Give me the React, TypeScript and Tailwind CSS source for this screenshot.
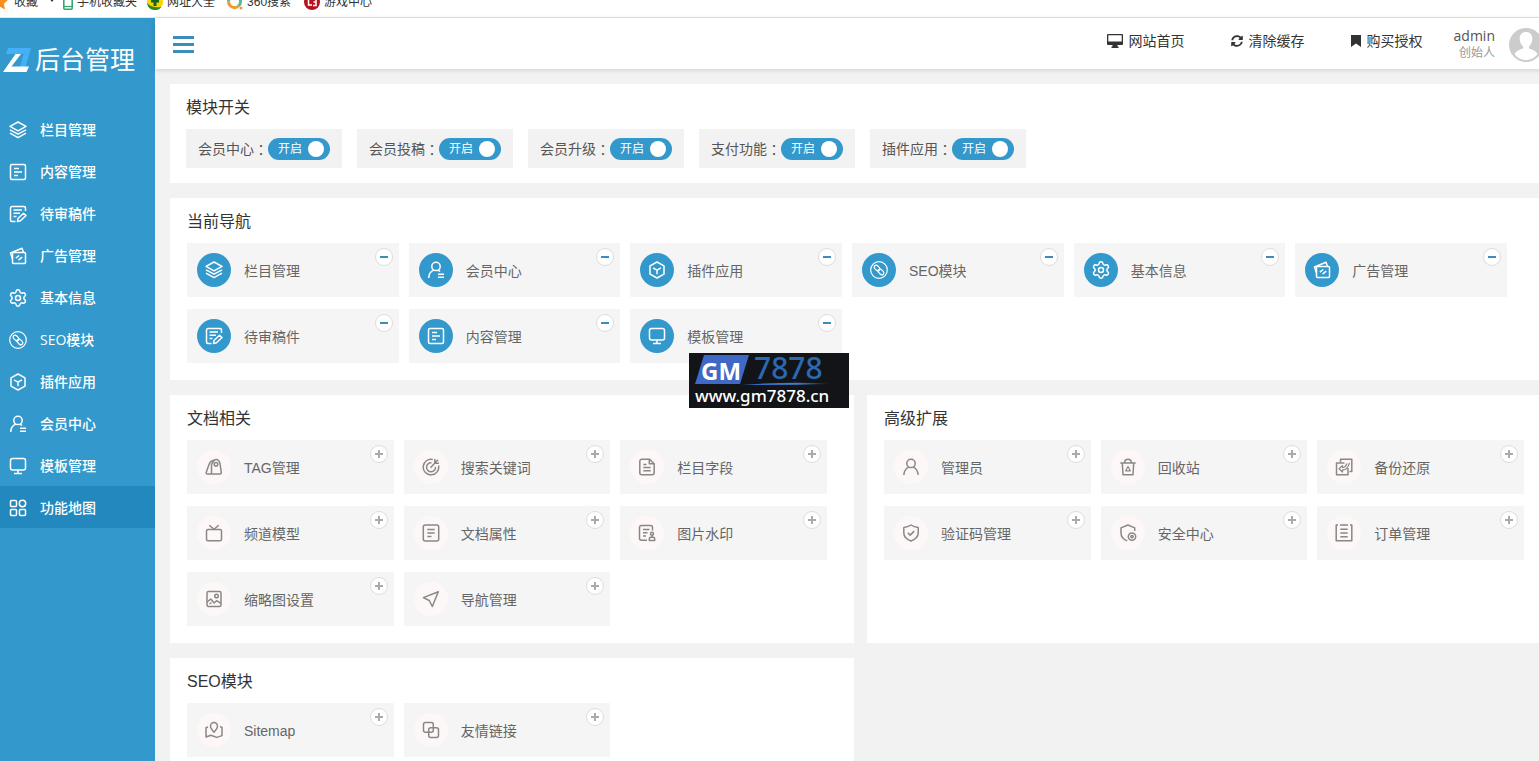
import { useState } from "react";
import type { ReactNode } from "react";
import { Settings } from "lucide-react";
import { FaSyncAlt } from "react-icons/fa";

const icons: Record<string, ReactNode> = {
  layers: (
    <path d="M9 1 17 5.400 9 9.800 1 5.400zM1 8.800l8 4.400 8-4.400M1 12.200l8 4.400 8-4.400" />
  ),
  content: (
    <>
      <rect x="1.500" y="1.500" width="15" height="15" rx="1.500" />
      <path d="M5 5.500h5M5 9h8M5 12.500h4" />
    </>
  ),
  draft: (
    <>
      <path d="M16.500 6V3A1.500 1.500 0 0 0 15 1.500H3A1.500 1.500 0 0 0 1.500 3v12A1.500 1.500 0 0 0 3 16.500h3.500M4.500 5H13M4.500 8.300H11M4.500 11.600h3" />
      <path d="m9 13.500 5.500-5.300 2.500 2.300-5.500 5.300-3 .7z" />
    </>
  ),
  ad: (
    <>
      <rect x="3.500" y="5.500" width="13" height="11" rx="1" />
      <path d="M3.500 12 1.500 6 13 1.300l1.500 4.200M6.800 11.200 10.200 8.500M9.500 13.200l3.700-3" />
    </>
  ),
  seo: (
    <>
      <circle cx="9" cy="9" r="8.300" strokeWidth="1.200" />
      <g transform="rotate(45 9 9)" strokeWidth="1.200">
        <rect x="3" y="7" width="6.600" height="4" rx="2" />
        <rect x="8.400" y="7" width="6.600" height="4" rx="2" />
      </g>
    </>
  ),
  plugin: (
    <>
      <path d="M9 1 16 4.900v8.200L9 17l-7-3.900V4.900z" />
      <path d="m5 6.800 4 2.300 4-2.300M9 9.100v4.200" />
    </>
  ),
  member: (
    <>
      <circle cx="9" cy="5.400" r="4.200" />
      <path d="M1.700 17c0-3.700 1.800-6.600 5.300-7.900M11 9.200c.8.300 1.500.8 2 1.400M11 13.200h6M11 16.300h6" />
    </>
  ),
  template: (
    <>
      <rect x="1.500" y="1.500" width="15" height="11.500" rx="2" />
      <path d="M9 13v3.300M5 16.500h8" />
    </>
  ),
  map: (
    <>
      <rect x="1.500" y="1.500" width="6" height="6" rx="1" />
      <circle cx="13.500" cy="4.500" r="3.200" />
      <rect x="1.500" y="10.500" width="6" height="6" rx="1" />
      <rect x="10.500" y="10.500" width="6" height="6" rx="1" />
    </>
  ),
  tag: (
    <>
      <path d="M6.500 16V6.500L9 2.300c1.600-1.300 4-1 5 .8l1 2.400 1.300 9a1.300 1.300 0 0 1-1.300 1.500H2.300a1.200 1.200 0 0 1-1.100-1.600L4 6.500c.8-2 2.500-4 5-4.200" />
      <circle cx="11" cy="6.300" r="1.800" />
    </>
  ),
  target: (
    <>
      <path d="M10.800 1.500A7.800 7.800 0 1 0 16.600 7.500" />
      <path d="M9.500 4.800a4.500 4.500 0 1 0 4 4M8.500 9.700l4.600-4.900M12.800 1v4.200h4.200M13 5l3-3.300" />
    </>
  ),
  field: (
    <>
      <path d="M11.500 1.200H3.800a2 2 0 0 0-2 2v11.600a2 2 0 0 0 2 2h10.400a2 2 0 0 0 2-2V5.800z" />
      <path d="M11.300 1.500v4.300H16M5.300 6.500h3.200M5.300 9.500h7.400M5.300 12.700h7.400" />
    </>
  ),
  channel: (
    <>
      <rect x="1.500" y="5.500" width="15" height="11.300" rx="1.500" />
      <path d="M4.300 1.200 9 5.300l4.700-4.100" />
    </>
  ),
  attr: (
    <>
      <rect x="1.300" y="1" width="15.400" height="16" rx="2" />
      <path d="M5.300 5.500h7.400M5.300 9h7.400M5.300 12.500h4.200" />
    </>
  ),
  watermark: (
    <>
      <path d="M14.500 6.500v-3a2 2 0 0 0-2-2h-9a2 2 0 0 0-2 2v10.800a2 2 0 0 0 2 2H9M5 5.500h6.500M5 8.700h4.500M5 12h3" />
      <circle cx="14" cy="9.800" r="1.500" />
      <path d="M14 11.300v2M11.300 16.500v-1.700c0-1 .6-1.500 1.500-1.500h2.400c.9 0 1.500.5 1.500 1.500v1.700z" />
    </>
  ),
  image: (
    <>
      <rect x="2" y="1.500" width="14" height="15" rx="1.500" />
      <circle cx="11.500" cy="6" r="1.800" />
      <path d="m2.200 12 3.600-3 3.300 4 2.500-2.300 4.200 2.600M4.500 14l2-1.500" />
    </>
  ),
  navigate: <path d="M16.300 1.700 1.300 7.600l6 2.900 3 6z" />,
  user: (
    <>
      <circle cx="9" cy="5.400" r="4.200" />
      <path d="M1.800 17c.3-4.200 2-6.700 5-7.900M16.200 17c-.3-4.200-2-6.700-5-7.900" />
    </>
  ),
  recycle: (
    <>
      <path d="M1.300 5h15.400M3.300 5l.7 11.700h10L14.700 5M5.500 4.800C5.700 2.600 7 1.300 9 1.300s3.300 1.300 3.500 3.500" />
      <path d="m9 8.500-2.300 4.300h4.600z" strokeWidth="1.200" />
    </>
  ),
  backup: (
    <>
      <path d="M5.500 4V1.200h11.300v12.300H14.500M13 10v6.800H1.500V5h8" />
      <path d="M7.500 7.500 4 10.800 7.500 14v-2.200c3 .2 5.500-2 7-7M7.500 7.500v2c2 0 3.500-1.500 4.500-4" strokeWidth="1.200" />
    </>
  ),
  shield: (
    <>
      <path d="M9 1c2 1.500 4.500 2.300 7.200 2.400v5.400c0 4-2.800 6.700-7.200 8.200-4.400-1.500-7.200-4.200-7.200-8.200V3.400C4.500 3.300 7 2.500 9 1z" />
      <path d="m5.800 8.700 2.400 2.400 4-4" />
    </>
  ),
  security: (
    <>
      <path d="M15.700 7V3.900L9 1 2 3.900V9c0 3.700 2.500 6.500 6.200 7.900" />
      <circle cx="13" cy="12.600" r="3.700" />
      <circle cx="13" cy="12.600" r="1.200" />
    </>
  ),
  order: (
    <>
      <path d="M3 1H1.200v15.800h15.600V1H15M5 1h8" />
      <path d="M5.300 5.300h7.400M5.300 9h7.400M5.300 12.700h7.400" />
    </>
  ),
  sitemap: (
    <>
      <path d="M9 11.200C7 9 5.500 7.200 5.500 5a3.500 3.500 0 0 1 7 0c0 2.200-1.500 4-3.500 6.200z" />
      <path d="M3 6 1 6.800V16l4.800-1.800 6 2.200 5.200-1.800V6.300L15 5.800" />
    </>
  ),
  link: (
    <>
      <rect x="1.500" y="1.500" width="9.800" height="9.800" rx="2" />
      <rect x="6.700" y="6.700" width="9.800" height="9.800" rx="2" />
    </>
  ),
};

const Icon = ({ name }: { name: string }) => {
  if (name === "gear") return <Settings size={20} strokeWidth={1.8} className="-mx-px" />;

  return (
    <svg
      viewBox="0 0 18 18"
      className="w-[18px] h-[18px] shrink-0"
      fill="none"
      stroke="currentColor"
      strokeWidth="1.500"
      strokeLinejoin="round"
    >
      {icons[name]}
    </svg>
  );
};

type Item = { icon: string; label: string };

const menu: Item[] = [
  { icon: "layers", label: "栏目管理" },
  { icon: "content", label: "内容管理" },
  { icon: "draft", label: "待审稿件" },
  { icon: "ad", label: "广告管理" },
  { icon: "gear", label: "基本信息" },
  { icon: "seo", label: "SEO模块" },
  { icon: "plugin", label: "插件应用" },
  { icon: "member", label: "会员中心" },
  { icon: "template", label: "模板管理" },
  { icon: "map", label: "功能地图" },
];

const currentNav: Item[] = [
  { icon: "layers", label: "栏目管理" },
  { icon: "member", label: "会员中心" },
  { icon: "plugin", label: "插件应用" },
  { icon: "seo", label: "SEO模块" },
  { icon: "gear", label: "基本信息" },
  { icon: "ad", label: "广告管理" },
  { icon: "draft", label: "待审稿件" },
  { icon: "content", label: "内容管理" },
  { icon: "template", label: "模板管理" },
];

const documents: Item[] = [
  { icon: "tag", label: "TAG管理" },
  { icon: "target", label: "搜索关键词" },
  { icon: "field", label: "栏目字段" },
  { icon: "channel", label: "频道模型" },
  { icon: "attr", label: "文档属性" },
  { icon: "watermark", label: "图片水印" },
  { icon: "image", label: "缩略图设置" },
  { icon: "navigate", label: "导航管理" },
];

const advanced: Item[] = [
  { icon: "user", label: "管理员" },
  { icon: "recycle", label: "回收站" },
  { icon: "backup", label: "备份还原" },
  { icon: "shield", label: "验证码管理" },
  { icon: "security", label: "安全中心" },
  { icon: "order", label: "订单管理" },
];

const seo: Item[] = [
  { icon: "sitemap", label: "Sitemap" },
  { icon: "link", label: "友情链接" },
];

const BookmarksBar = () => (
  <div className="flex h-[18px] shrink-0 items-end overflow-hidden border-b border-[#e6e6e6] bg-white pb-[7px] text-xs leading-4 text-[#333]">
    <a href="#" className="flex items-end">
      <svg viewBox="0 0 16 16" className="-ml-2 mr-1.5 h-4 w-4">
        <path d="m8 0 2.400 5.200 5.600.7-4.100 3.900 1.100 5.700L8 12.700l-5 2.800 1.100-5.700L0 5.900l5.600-.7z" fill="#f78f1e" />
      </svg>
      收藏
      <svg viewBox="0 0 6 4" className="mb-2 ml-[11px] h-1 w-1.5">
        <path d="M0 0h6L3 4z" fill="#333" />
      </svg>
    </a>
    <a href="#" className="ml-2 flex items-end">
      <svg viewBox="0 0 10 16" className="mr-1 h-4 w-2.5">
        <rect x=".8" y=".8" width="8.400" height="14.400" rx="1" fill="#fff" stroke="#35a870" strokeWidth="1.600" />
        <path d="M1 12.500h8" stroke="#35a870" strokeWidth="1.200" />
      </svg>
      手机收藏夹
    </a>
    <a href="#" className="ml-2.5 flex items-end">
      <svg viewBox="0 0 16 16" className="mr-1 h-4 w-4">
        <circle cx="8" cy="8" r="8" fill="#f6d500" />
        <path d="M0 9a8 8 0 0 0 14.500 3.700C9 14 4 13 0 9z" fill="#2c8a2c" />
        <path d="M8 3v9M4 7h8" stroke="#14641e" strokeWidth="3" />
      </svg>
      网址大全
    </a>
    <a href="#" className="ml-3 flex items-end">
      <svg viewBox="0 0 16 16" className="mr-1 h-4 w-4" fill="none" strokeWidth="3">
        <path d="M1.500 7.500a6 6 0 0 0 10 4.500" stroke="#f39a2b" />
        <path d="M1.500 7.500a6 6 0 1 1 10 4.500" stroke="#57b8a0" />
        <circle cx="14" cy="14" r="1.500" fill="#f39a2b" stroke="none" />
      </svg>
      360搜索
    </a>
    <a href="#" className="ml-[13px] flex items-end">
      <svg viewBox="0 0 16 16" className="mr-1 h-4 w-4">
        <circle cx="8" cy="8" r="8" fill="#b5121f" />
        <path d="M7 4.500H4.500v6.500H8M9 5h3v3H9.500M12 8v3.500H9" fill="none" stroke="#fff" strokeWidth="1.500" />
      </svg>
      游戏中心
    </a>
  </div>
);

const Sidebar = () => {
  const [active, setActive] = useState("功能地图");

  return (
    <aside className="w-[155px] shrink-0 bg-[#3398cc] text-white">
      <div className="flex h-[90px] items-center pl-[3px] pb-1.5">
        <svg viewBox="0 0 28 24" className="h-6 w-7 shrink-0">
          <path d="M5 0h23l-5.500 19H17l3.500-13H3z" fill="#45b0f5" />
          <path d="M12.500 6H18L8.500 18.500H26L23.500 24H0z" fill="#fff" />
        </svg>
        <span className="ml-1 whitespace-nowrap text-[25px] leading-8">后台管理</span>
      </div>
      <nav>
        {menu.map((item) => (
          <a
            key={item.label}
            href="#"
            onClick={() => setActive(item.label)}
            className={`flex h-[42px] items-center gap-[13px] pl-[9px] pt-0.5 font-['Open_Sans','Noto_Sans_CJK_SC',sans-serif] text-sm font-medium ${
              active === item.label ? "bg-[#2288bd]" : ""
            }`}
          >
            <Icon name={item.icon} />
            <span>{item.label}</span>
          </a>
        ))}
      </nav>
    </aside>
  );
};

const Header = () => (
  <header className="z-10 flex h-[51px] shrink-0 items-center bg-white pl-[18px] pr-2 shadow-[0_1px_5px_rgba(0,0,0,0.15)]">
    <button aria-label="菜单" className="flex w-[21px] flex-col gap-1 pt-0.5">
      <span className="h-[3px] bg-[#3d8dbc]" />
      <span className="h-[3px] bg-[#3d8dbc]" />
      <span className="h-[3px] bg-[#3d8dbc]" />
    </button>
    <div className="ml-auto flex items-center gap-[46px] pb-1.5 text-sm text-[#333]">
      <a href="#" className="flex items-center gap-1.5">
        <svg viewBox="0 0 16 14" className="h-3.5 w-4">
          <path d="M1 0h14a1 1 0 0 1 1 1v9a1 1 0 0 1-1 1h-4.500v1.500h1V14h-7v-1.500h1V11H1a1 1 0 0 1-1-1V1a1 1 0 0 1 1-1zm.3 1.300v6.200h13.400V1.300z" fill="currentColor" />
        </svg>
        网站首页
      </a>
      <a href="#" className="flex items-center gap-1.5">
        <FaSyncAlt size={12} />
        清除缓存
      </a>
      <a href="#" className="flex items-center gap-1.5">
        <svg viewBox="0 0 10 12" className="h-3 w-2.5">
          <path d="M0 0h10v12L5 8.500 0 12z" fill="currentColor" />
        </svg>
        购买授权
      </a>
    </div>
    <div className="ml-[31px] flex flex-col text-right font-['Open_Sans','Noto_Sans_CJK_SC',sans-serif]">
      <span className="text-sm leading-[18px] text-[#555]">admin</span>
      <span className="text-xs leading-4 text-[#999]">创始人</span>
    </div>
    <svg viewBox="0 0 34 34" className="ml-3.5 mt-0.5 h-[34px] w-[34px] shrink-0">
      <circle cx="17" cy="17" r="17" fill="#ccc" />
      <path d="M17 4c-4 0-6.300 2.700-6.300 6.800 0 3.500 1.400 6 3.300 7.500v2.200c-4 1.200-7.300 2.700-8.500 5.500 2.500 3.700 6.700 6 11.500 6s9-2.300 11.500-6c-1.200-2.800-4.500-4.300-8.500-5.500v-2.200c1.900-1.500 3.300-4 3.300-7.500C23.300 6.700 21 4 17 4z" fill="#fff" />
    </svg>
  </header>
);

const Panel = ({ title, children }: { title: string; children: ReactNode }) => (
  <section className="bg-white px-[17px] pb-[17px] pt-3">
    <h2 className="mb-[9px] text-base leading-6 text-[#333]">{title}</h2>
    {children}
  </section>
);

const Card = ({ item, added = false }: { item: Item; added?: boolean }) => (
  <div className="relative flex h-[54px] items-center bg-[#f5f5f5] pl-2.5">
    <a href="#" className="flex items-center gap-[13px] text-sm text-[#666]">
      <span
        className={`flex h-[34px] w-[34px] items-center justify-center rounded-full ${
          added ? "bg-[#3398cc] text-white" : "bg-[#fdf8f7] text-[#888]"
        }`}
      >
        <Icon name={item.icon} />
      </span>
      <span className="pt-0.5">{item.label}</span>
    </a>
    <button
      aria-label={added ? "移除" : "添加"}
      className={`absolute right-1.5 top-[5px] flex h-[18px] w-[18px] items-center justify-center rounded-full border border-[#ddd] bg-white ${
        added ? "text-[#3d8dbc]" : "text-[#aaa]"
      }`}
    >
      <svg viewBox="0 0 8 8" className="h-2 w-2" stroke="currentColor" strokeWidth="2">
        <path d={added ? "M0 4h8" : "M0 4h8M4 0v8"} />
      </svg>
    </button>
  </div>
);

const ModuleSwitch = ({ label }: { label: string }) => {
  const [on, setOn] = useState(true);

  return (
    <label className="relative flex h-[39px] cursor-pointer items-center bg-[#f2f2f2] px-3 text-sm text-[#555]">
      {label}
      <span className="font-['Noto_Sans_CJK_TC',sans-serif]">：</span>
      <input
        type="checkbox"
        className="sr-only"
        checked={on}
        onChange={() => setOn(!on)}
      />
      <span
        className={`flex h-[22px] w-[62px] items-center justify-between rounded-full pl-2.5 pr-1.5 text-xs text-white ${
          on ? "bg-[#3398cc]" : "flex-row-reverse bg-gray-400"
        }`}
      >
        {on ? "开启" : "关闭"}
        <span className="h-4 w-4 rounded-full bg-white" />
      </span>
    </label>
  );
};

const Watermark = () => (
  <div className="absolute left-[689px] top-[353px] z-20 h-[55px] w-40 bg-[#121417] font-['Noto_Sans','Open_Sans',sans-serif]">
    <svg viewBox="0 0 160 55" className="absolute inset-0 h-full w-full">
      <defs>
        <linearGradient id="swoosh">
          <stop offset="0" stopColor="#2f62b8" />
          <stop offset="0.6" stopColor="#3f7fd0" />
          <stop offset="1" stopColor="#121417" />
        </linearGradient>
      </defs>
      <path d="M15 2h45l-9 29H6z" fill="#3f69c4" />
      <path d="M52 32q50-4 92-1-40 1-92 1z" fill="url(#swoosh)" />
    </svg>
    <div className="relative flex h-[34px] items-start pl-3">
      <span className="w-[53px] text-2xl font-bold leading-9 text-white">GM</span>
      <span className="text-3xl font-medium leading-[30px] text-[#2b69b3]">7878</span>
    </div>
    <div className="relative pl-1.5 text-[17px] font-medium leading-[18px] text-white">www.gm7878.cn</div>
  </div>
);

const App = () => {
  return (
    <div className="relative flex h-screen flex-col overflow-hidden bg-[#f2f2f2] font-['Liberation_Sans','Noto_Sans_CJK_SC',sans-serif]">
      <BookmarksBar />
      <div className="flex min-h-0 flex-1">
        <Sidebar />
        <div className="-mr-3 flex min-w-0 flex-1 flex-col">
          <Header />
          <main className="flex min-h-0 flex-1 flex-col gap-[15px] overflow-hidden pl-[15px] pt-[15px]">
            <section className="shrink-0 bg-white px-4 pb-[15px] pt-3">
              <h2 className="mb-[9px] text-base leading-6 text-[#333]">模块开关</h2>
              <div className="flex flex-wrap gap-[15px]">
                <ModuleSwitch label="会员中心" />
                <ModuleSwitch label="会员投稿" />
                <ModuleSwitch label="会员升级" />
                <ModuleSwitch label="支付功能" />
                <ModuleSwitch label="插件应用" />
              </div>
            </section>

            <Panel title="当前导航">
              <div className="mr-[27px] grid grid-cols-6 gap-x-2.5 gap-y-3">
                {currentNav.map((item) => (
                  <Card key={item.label} item={item} added />
                ))}
              </div>
            </Panel>

            <div className="grid grid-cols-2 gap-x-[13px] gap-y-[15px]">
              <Panel title="文档相关">
                <div className="mr-2.5 grid grid-cols-3 gap-x-2.5 gap-y-3">
                  {documents.map((item) => (
                    <Card key={item.label} item={item} />
                  ))}
                </div>
              </Panel>
              <Panel title="高级扩展">
                <div className="mr-2.5 grid grid-cols-3 gap-x-2.5 gap-y-3">
                  {advanced.map((item) => (
                    <Card key={item.label} item={item} />
                  ))}
                </div>
              </Panel>
              <Panel title="SEO模块">
                <div className="mr-2.5 grid grid-cols-3 gap-x-2.5 gap-y-3">
                  {seo.map((item) => (
                    <Card key={item.label} item={item} />
                  ))}
                </div>
              </Panel>
            </div>
          </main>
        </div>
      </div>
      <Watermark />
    </div>
  );
};

export default App;
